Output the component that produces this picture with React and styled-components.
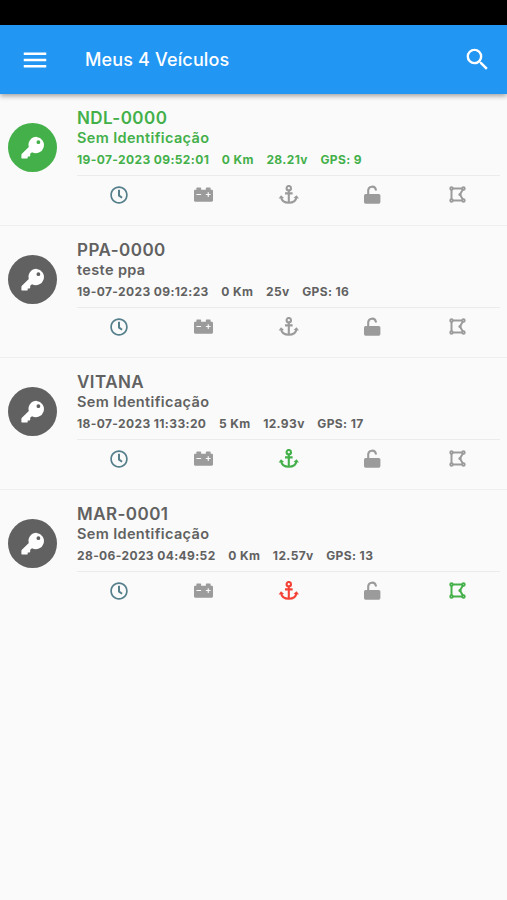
// node modules
import React from 'react';
import styled, { createGlobalStyle } from 'styled-components';
import { MdMenu, MdSearch } from 'react-icons/md';
import { FaRegClock, FaCarBattery } from 'react-icons/fa';

// colors
const GREEN = '#43b04a';
const DARK = '#616161';
const GREY = '#9b9b9b';
const RED = '#f44336';
const TEAL = '#557f8b';

// styled css components
const GlobalStyle = createGlobalStyle`
    body {
        margin: 0;
        background-color: #fafafa;
        font-family: Inter, 'Liberation Sans', sans-serif;
    }
`;
const Screen = styled.div`
    display: flex;
    flex-direction: column;
    min-height: 100vh;
    overflow: hidden;
`;
const StatusBar = styled.div`
    height: 25px;
    background-color: #000;
`;
const AppBar = styled.header`
    display: flex;
    align-items: center;
    box-sizing: border-box;
    height: 69px;
    padding: 0 15px 0 20px;
    background-color: #2196f3;
    color: #fff;
    box-shadow: 0 2px 5px rgba(0, 0, 0, 0.36);
`;
const BarButton = styled.button`
    display: flex;
    padding: 0;
    border: 0;
    background: none;
    color: inherit;
    font-size: ${props => props.$size}px;
`;
const Title = styled.h1`
    flex: 1;
    margin: 0 0 0 35px;
    font-size: 18px;
    line-height: 24px;
    font-weight: 500;
    letter-spacing: 0.15px;
`;
const List = styled.ul`
    margin: 0;
    padding: 0;
    list-style: none;
`;
const Row = styled.li`
    display: flex;
    box-sizing: border-box;
    height: 132px;
    padding: 14px 7px 0 8px;
    border-bottom: 1px solid #efefef;
    color: ${props => props.$active ? GREEN : DARK};

    &:last-child {
        border-bottom: 0;
    }
`;
const KeyBadge = styled.div`
    display: flex;
    align-items: center;
    justify-content: center;
    width: 49px;
    height: 49px;
    margin: 15px 20px 0 0;
    border-radius: 50%;
    background-color: ${props => props.$active ? GREEN : DARK};
    color: #fff;
`;
const Info = styled.div`
    flex: 1;
`;
const Plate = styled.div`
    font-size: 17px;
    line-height: 21px;
    font-weight: 600;
    letter-spacing: 0.45px;
`;
const Name = styled.div`
    font-size: 14.5px;
    line-height: 18px;
    font-weight: 600;
    letter-spacing: 0.36px;
`;
const Details = styled.div`
    display: flex;
    gap: 12.6px;
    height: 28px;
    border-bottom: 1px solid #ebebeb;
    font-size: 12px;
    line-height: 25px;
    font-weight: 700;
    letter-spacing: 0.38px;
    white-space: pre;
`;
const Actions = styled.div`
    display: grid;
    grid-template-columns: repeat(5, 1fr);
    height: 37px;
`;
const Action = styled.div`
    display: flex;
    align-items: center;
    justify-content: center;
    color: ${props => props.$color};
    font-size: ${props => props.$size || 19}px;
`;

// icons
const KeyIcon = () => (
    <svg width="24" height="24" viewBox="0 0 24 24" fill="currentColor">
        <path
            fillRule="evenodd"
            d="M15.6 0.8a8 8 0 0 0-7.8 10.2L0.9 17.8q-0.5 0.5-0.5 1.2v2.7q0 0.9 0.9 0.9h4.5q0.9 0 0.9-0.9v-1.2h1.6q0.9 0 0.9-0.9v-1.9l1.8-1.5a8.1 8.1 0 1 0 4.6-15.2zM17.4 4.3a1.9 1.9 0 1 1 0 3.8a1.9 1.9 0 0 1 0-3.8z"
        />
    </svg>
);

const AnchorIcon = () => (
    <svg width="21" height="20" viewBox="-0.8 0.4 21 20" fill="none" stroke="currentColor" strokeWidth="2.1">
        <circle cx="10" cy="3.6" r="2.2" />
        <path d="M10 5.8V18M6.2 8.8h7.6" />
        <path d="M2.3 12.4C2.8 16 5.8 18.2 10 18.2s7.2-2.2 7.7-5.8" />
        <path d="M-0.2 14L2.2 10.6l3.1 2.9zM20.2 14l-2.4-3.4l-3.1 2.9z" fill="currentColor" stroke="none" />
    </svg>
);

const UnlockIcon = () => (
    <svg width="18" height="19" viewBox="0.4 0.1 18 19" fill="none" stroke="currentColor">
        <rect x="0.4" y="9" width="16.4" height="9.8" rx="1.6" fill="currentColor" stroke="none" />
        <path d="M4.6 9.4V5.6a3.9 3.9 0 0 1 7.7-0.8" strokeWidth="2.1" strokeLinecap="round" />
    </svg>
);

const FenceIcon = () => (
    <svg width="18" height="17" viewBox="0 0 18 17" fill="none" stroke="currentColor" strokeWidth="2">
        <path d="M2.5 2.5h12l-3.6 6l3.6 6h-12z" strokeLinejoin="round" />
        <g fill="#fafafa" strokeWidth="1.8">
            <circle cx="2.5" cy="2.5" r="1.3" />
            <circle cx="14.5" cy="2.5" r="1.3" />
            <circle cx="2.5" cy="14.5" r="1.3" />
            <circle cx="14.5" cy="14.5" r="1.3" />
        </g>
        <circle cx="11" cy="8.5" r="1.6" fill="currentColor" stroke="none" />
    </svg>
);

const vehicles = [
    { plate: 'NDL-0000', name: 'Sem Identificação', date: '19-07-2023 09:52:01', speed: '0 Km', volts: '28.21v', gps: 9, active: true },
    { plate: 'PPA-0000', name: 'teste ppa', date: '19-07-2023 09:12:23', speed: '0 Km', volts: '25v', gps: 16 },
    { plate: 'VITANA', name: 'Sem Identificação', date: '18-07-2023 11:33:20', speed: '5 Km', volts: '12.93v', gps: 17, anchor: GREEN },
    { plate: 'MAR-0001', name: 'Sem Identificação', date: '28-06-2023 04:49:52', speed: '0 Km', volts: '12.57v', gps: 13, anchor: RED, fence: GREEN },
];

const Vehicle = ({ vehicle }) => (
    <Row $active={vehicle.active}>
        <KeyBadge $active={vehicle.active}><KeyIcon /></KeyBadge>
        <Info>
            <Plate>{vehicle.plate}</Plate>
            <Name>{vehicle.name}</Name>
            <Details>
                <span>{vehicle.date}</span>
                <span>{vehicle.speed}</span>
                <span>{vehicle.volts}</span>
                <span>{`GPS: ${vehicle.gps}`}</span>
            </Details>
            <Actions>
                <Action $color={TEAL} $size={18}><FaRegClock /></Action>
                <Action $color={GREY}><FaCarBattery /></Action>
                <Action $color={vehicle.anchor || GREY}><AnchorIcon /></Action>
                <Action $color={GREY}><UnlockIcon /></Action>
                <Action $color={vehicle.fence || GREY}><FenceIcon /></Action>
            </Actions>
        </Info>
    </Row>
);

const App = () => {
    return (
        <>
            <GlobalStyle />
            <Screen>
                <StatusBar />
                <AppBar>
                    <BarButton $size={30} aria-label="Menu"><MdMenu /></BarButton>
                    <Title>Meus {vehicles.length} Veículos</Title>
                    <BarButton $size={29} aria-label="Buscar"><MdSearch /></BarButton>
                </AppBar>
                <List>
                    {vehicles.map(vehicle => (
                        <Vehicle key={vehicle.plate} vehicle={vehicle} />
                    ))}
                </List>
            </Screen>
        </>
    )
}

export default App;
